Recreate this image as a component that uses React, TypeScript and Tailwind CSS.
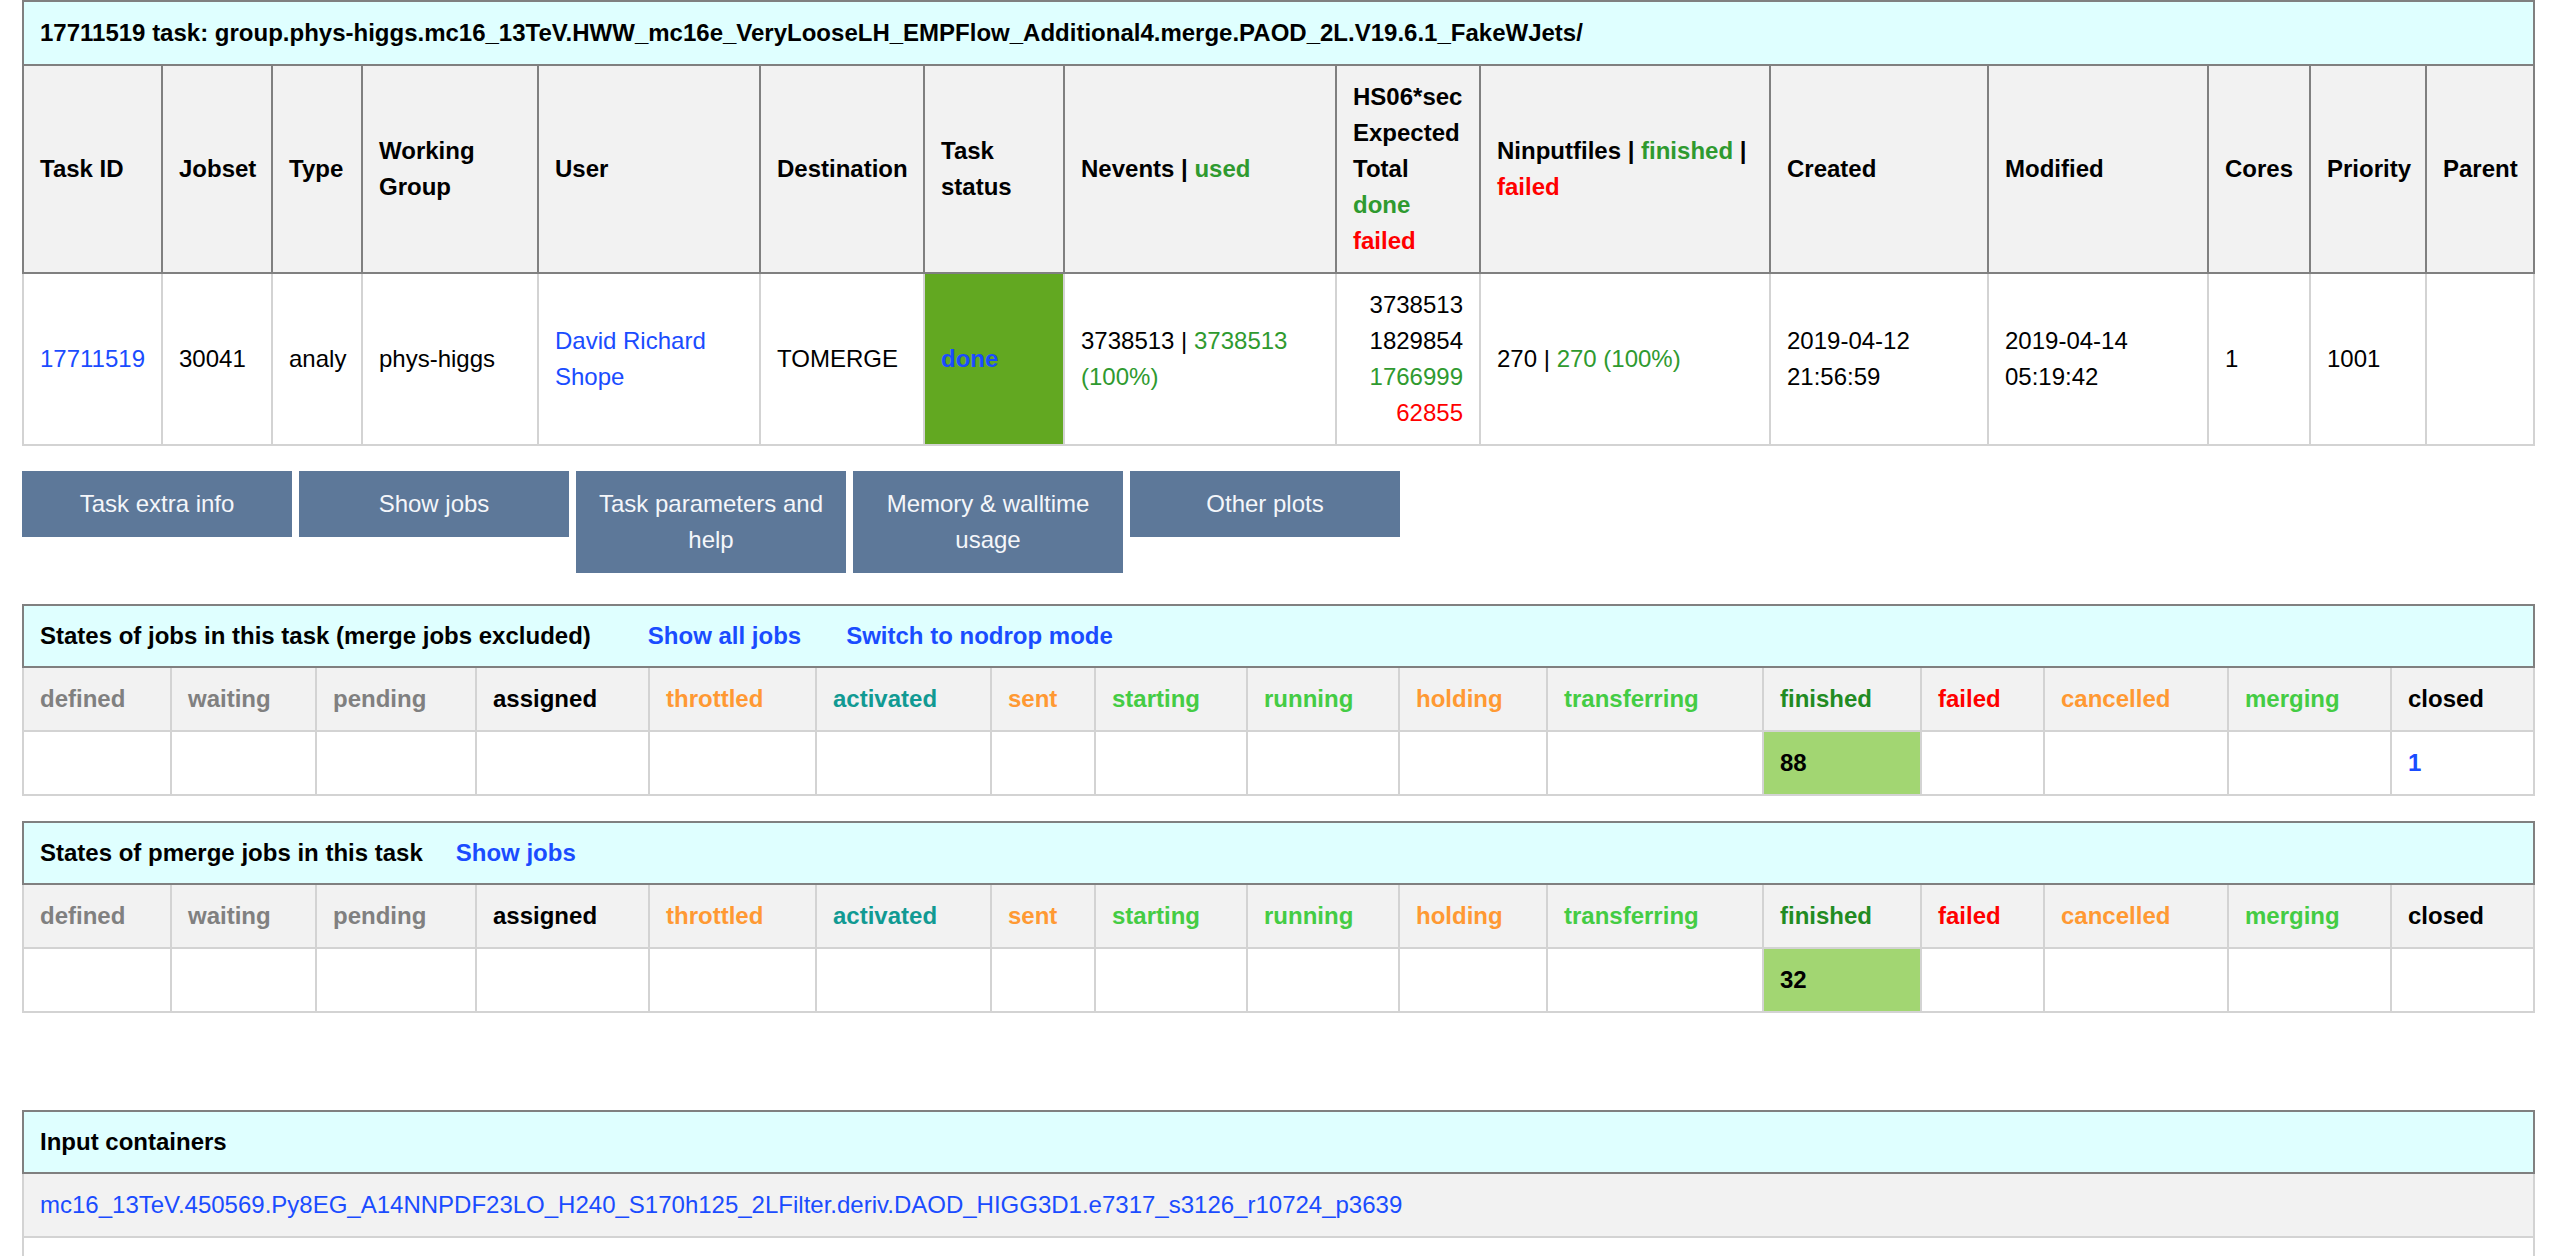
import type React from "react";

const BLUE = "text-[#1a4cff]";
const GREEN = "text-[#2f9a2f]";
const RED = "text-[#ff0000]";

const taskCols =
  "grid-cols-[141px_110px_90px_176px_222px_164px_140px_272px_144px_290px_218px_220px_102px_116px_108px]";
const stateCols =
  "grid-cols-[150px_145px_160px_173px_167px_175px_104px_152px_152px_148px_216px_158px_123px_184px_163px_143px]";

interface StateCol {
  name: string;
  color: string;
}

const states: StateCol[] = [
  { name: "defined", color: "text-[#808080]" },
  { name: "waiting", color: "text-[#808080]" },
  { name: "pending", color: "text-[#808080]" },
  { name: "assigned", color: "text-black" },
  { name: "throttled", color: "text-[#ff9933]" },
  { name: "activated", color: "text-[#119a93]" },
  { name: "sent", color: "text-[#ff9933]" },
  { name: "starting", color: "text-[#44cc44]" },
  { name: "running", color: "text-[#44cc44]" },
  { name: "holding", color: "text-[#ff9933]" },
  { name: "transferring", color: "text-[#44cc44]" },
  { name: "finished", color: "text-[#228b22]" },
  { name: "failed", color: "text-[#ff0000]" },
  { name: "cancelled", color: "text-[#ff9933]" },
  { name: "merging", color: "text-[#44cc44]" },
  { name: "closed", color: "text-black" },
];

// header cell of the task table
const TH: React.FC<{ first?: boolean; children?: React.ReactNode }> = ({ first, children }) => (
  <div
    className={`flex items-center px-4 py-[13px] bg-[#f2f2f2] border-r-2 border-b-2 border-[#808080] font-bold ${
      first ? "border-l-2" : ""
    }`}
  >
    <div>{children}</div>
  </div>
);

const TD: React.FC<{ first?: boolean; right?: boolean; className?: string; children?: React.ReactNode }> = ({
  first,
  right,
  className = "",
  children,
}) => (
  <div
    className={`flex items-center px-4 py-[13px] border-r-2 border-b-2 border-[#d3d3d3] ${
      first ? "border-l-2" : ""
    } ${right ? "justify-end text-right" : ""} ${className}`}
  >
    <div>{children}</div>
  </div>
);

const StatesTable: React.FC<{
  title: React.ReactNode;
  values: Record<string, React.ReactNode>;
}> = ({ title, values }) => (
  <div className={`grid ${stateCols} w-[2513px]`}>
    <div className="col-span-full border-2 border-[#808080] bg-[#dfffff] px-4 py-[12px] font-bold">
      {title}
    </div>
    {states.map((s, i) => (
      <div
        key={s.name}
        className={`px-4 py-[13px] bg-[#f2f2f2] border-r-2 border-b-2 border-[#d3d3d3] font-bold ${s.color} ${
          i === 0 ? "border-l-2" : ""
        }`}
      >
        {s.name}
      </div>
    ))}
    {states.map((s, i) => {
      const v = values[s.name];
      const bg = s.name === "finished" && v ? "bg-[#a2d672]" : "bg-white";
      return (
        <div
          key={s.name}
          className={`min-h-[64px] px-4 py-[13px] border-r-2 border-b-2 border-[#d3d3d3] font-bold ${bg} ${
            i === 0 ? "border-l-2" : ""
          }`}
        >
          {v}
        </div>
      );
    })}
  </div>
);

const buttons = [
  "Task extra info",
  "Show jobs",
  "Task parameters and help",
  "Memory & walltime usage",
  "Other plots",
];

export default function App() {
  return (
    <div className="min-h-screen bg-white pl-[22px] pr-[25px] font-['Liberation_Sans',Arial,sans-serif] text-[24px] leading-[36px] text-black">
      {/* task summary */}
      <div className={`grid ${taskCols} w-[2513px]`}>
        <div className="col-span-full border-2 border-[#808080] bg-[#dfffff] px-4 py-[13px] font-bold">
          17711519 task: group.phys-higgs.mc16_13TeV.HWW_mc16e_VeryLooseLH_EMPFlow_Additional4.merge.PAOD_2L.V19.6.1_FakeWJets/
        </div>

        <TH first>Task ID</TH>
        <TH>Jobset</TH>
        <TH>Type</TH>
        <TH>Working Group</TH>
        <TH>User</TH>
        <TH>Destination</TH>
        <TH>Task status</TH>
        <TH>
          Nevents | <span className={GREEN}>used</span>
        </TH>
        <TH>
          HS06*sec
          <br />
          Expected
          <br />
          Total
          <br />
          <span className={GREEN}>done</span>
          <br />
          <span className={RED}>failed</span>
        </TH>
        <TH>
          Ninputfiles | <span className={GREEN}>finished</span> |
          <br />
          <span className={RED}>failed</span>
        </TH>
        <TH>Created</TH>
        <TH>Modified</TH>
        <TH>Cores</TH>
        <TH>Priority</TH>
        <TH>Parent</TH>

        <TD first>
          <span className={BLUE}>17711519</span>
        </TD>
        <TD>30041</TD>
        <TD>analy</TD>
        <TD>phys-higgs</TD>
        <TD>
          <span className={BLUE}>
            David Richard
            <br />
            Shope
          </span>
        </TD>
        <TD>TOMERGE</TD>
        <TD className="bg-[#62a821]">
          <span className={`font-bold ${BLUE}`}>done</span>
        </TD>
        <TD>
          3738513 | <span className={GREEN}>3738513</span>
          <br />
          <span className={GREEN}>(100%)</span>
        </TD>
        <TD right>
          3738513
          <br />
          1829854
          <br />
          <span className={GREEN}>1766999</span>
          <br />
          <span className={RED}>62855</span>
        </TD>
        <TD>
          270 | <span className={GREEN}>270 (100%)</span>
        </TD>
        <TD>
          2019-04-12
          <br />
          21:56:59
        </TD>
        <TD>
          2019-04-14
          <br />
          05:19:42
        </TD>
        <TD>1</TD>
        <TD>1001</TD>
        <TD />
      </div>

      {/* action buttons */}
      <div className="mt-[25px] flex items-start gap-[7px]">
        {buttons.map((b) => (
          <div
            key={b}
            className="w-[270px] bg-[#5d7899] px-3 py-[15px] text-center text-[#f4f6fa]"
          >
            {b}
          </div>
        ))}
      </div>

      <div className="mt-[31px]">
        <StatesTable
          title={
            <>
              <span>States of jobs in this task (merge jobs excluded)</span>
              <span className={`ml-[57px] ${BLUE}`}>Show all jobs</span>
              <span className={`ml-[45px] ${BLUE}`}>Switch to nodrop mode</span>
            </>
          }
          values={{ finished: "88", closed: <span className={BLUE}>1</span> }}
        />
      </div>

      <div className="mt-[25px]">
        <StatesTable
          title={
            <>
              <span>States of pmerge jobs in this task</span>
              <span className={`ml-[33px] ${BLUE}`}>Show jobs</span>
            </>
          }
          values={{ finished: "32" }}
        />
      </div>

      {/* input containers */}
      <div className="mt-[97px] w-[2513px]">
        <div className="border-2 border-[#808080] bg-[#dfffff] px-4 py-[12px] font-bold">
          Input containers
        </div>
        <div className="border-x-2 border-b-2 border-[#d3d3d3] bg-[#f2f2f2] px-4 py-[13px]">
          <span className={BLUE}>
            mc16_13TeV.450569.Py8EG_A14NNPDF23LO_H240_S170h125_2LFilter.deriv.DAOD_HIGG3D1.e7317_s3126_r10724_p3639
          </span>
        </div>
        <div className="h-[64px] border-x-2 border-b-2 border-[#d3d3d3] bg-white" />
      </div>
    </div>
  );
}
